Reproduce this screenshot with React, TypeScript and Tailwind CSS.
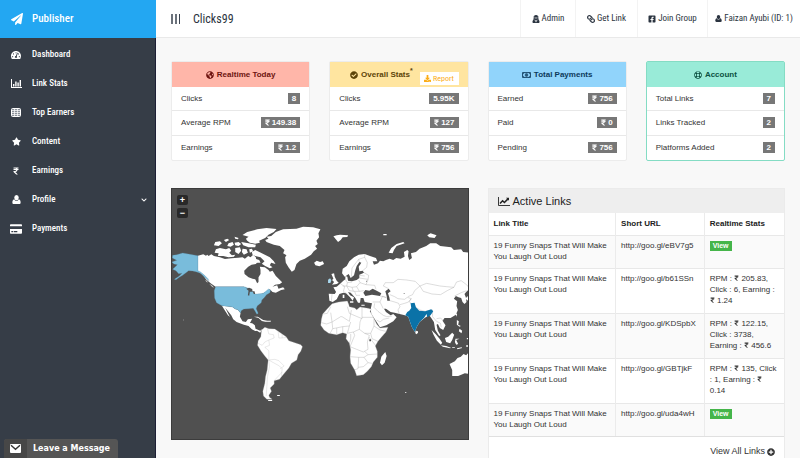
import type { ReactNode } from "react";
import {
  FaPaperPlane, FaTachometerAlt, FaStar, FaRupeeSign, FaGlobeAmericas, FaCheckCircle,
  FaDownload, FaUserSecret, FaFacebookSquare, FaRegLifeRing, FaPlusCircle, FaChevronDown, FaLink, FaCreditCard,
} from "react-icons/fa";

const narrow = "font-['Roboto_Condensed','Liberation_Sans_Narrow','Arial_Narrow',sans-serif]";

function BarsIcon() {
  return (
    <svg viewBox="0 0 11 9" className="h-[9px] w-[11px]" fill="currentColor">
      <path d="M0 0h1v8h10v1H0zM2 5h1.4v2.5H2zM4.200 2.500h1.400v5H4.200zM6.400 3.500h1.400v4H6.400zM8.600 1h1.400v6.500H8.600z" />
    </svg>
  );
}

function TableIcon() {
  return (
    <svg viewBox="0 0 10 9" className="h-[9px] w-[10px]">
      <rect x="0.500" y="0.500" width="9" height="8" rx="1" fill="#8d939b" stroke="#fff" />
      <path d="M1 2.500h8M1 4.500h8M1 6.500h8M3.500 1v7.500M6.500 1v7.500" stroke="#fff" strokeWidth="0.700" />
    </svg>
  );
}

function UserIcon({ className }: { className: string }) {
  return (
    <svg viewBox="0 0 10 10" className={className} fill="currentColor">
      <ellipse cx="5" cy="3" rx="2.500" ry="2.900" />
      <path d="M2.500 4.600C.8 4.900.4 6.800.4 8.300.4 9.400 1 10 2 10h6c1 0 1.600-.6 1.600-1.700 0-1.500-.4-3.400-2.100-3.700C6.900 5.700 6.100 6.400 5 6.400S3.100 5.700 2.500 4.600z" />
    </svg>
  );
}

function MoneyIcon() {
  return (
    <svg viewBox="0 0 18 12" className="h-[6px] w-[9px]" fill="none" stroke="currentColor" strokeWidth="1.600">
      <path d="M1 1h16v10H1z" />
      <ellipse cx="9" cy="6" rx="2.500" ry="3.200" />
      <path d="M9 4v4M1 4q3 0 3-3M17 4q-3 0-3-3M1 8q3 0 3 3M17 8q-3 0-3 3" />
    </svg>
  );
}

function TrendIcon() {
  return (
    <svg viewBox="0 0 12 9" className="h-[9px] w-[12px]" fill="none" stroke="currentColor">
      <path d="M.5 0v8.500H12" strokeWidth="0.900" />
      <path d="M2 6.500l2.600-2.700 1.800 1.700 3.600-3.600" strokeWidth="1.500" />
      <path d="M8 .7h3v3z" fill="currentColor" stroke="none" />
    </svg>
  );
}

const menu: { label: string; icon: ReactNode; more?: boolean }[] = [
  { label: "Dashboard", icon: <FaTachometerAlt size={10} /> },
  { label: "Link Stats", icon: <BarsIcon /> },
  { label: "Top Earners", icon: <TableIcon /> },
  { label: "Content", icon: <FaStar size={9} /> },
  { label: "Earnings", icon: <FaRupeeSign size={8} /> },
  { label: "Profile", icon: <UserIcon className="h-[9px] w-[9px]" />, more: true },
  { label: "Payments", icon: <FaCreditCard size={12} /> },
];

function Sidebar() {
  return (
    <aside className={`w-[156px] shrink-0 border-r border-[#1d1f35] bg-[#363d47] text-white ${narrow}`}>
      <a href="#" className="-mr-px flex h-[38px] items-center bg-[#23a7f2] pl-[11px] text-[11px] font-medium">
        <FaPaperPlane size={12} />
        <span className="ml-[9px]">Publisher</span>
      </a>
      <nav className="pt-[2px]">
        {menu.map((m) => (
          <a key={m.label} href="#" className="flex h-[29px] items-center pr-2 pl-[10px] text-[9px] font-medium">
            <span className="flex w-[12px] justify-center">{m.icon}</span>
            <span className="ml-[10px] flex-1">{m.label}</span>
            {m.more && <FaChevronDown size={6} />}
          </a>
        ))}
      </nav>
    </aside>
  );
}

function TopBar() {
  const links = [
    { label: "Admin", icon: <FaUserSecret size={8} />, w: "w-[55px]" },
    { label: "Get Link", icon: <FaLink size={8} className="-scale-x-100" />, w: "w-[62px]" },
    { label: "Join Group", icon: <FaFacebookSquare size={8} />, w: "w-[70px]" },
    { label: "Faizan Ayubi (ID: 1)", icon: <UserIcon className="h-[7px] w-[7px]" />, w: "w-[93px]" },
  ];
  return (
    <header className={`flex h-[38px] items-stretch border-b border-[#e9e9e9] bg-white text-[#2b3440] ${narrow}`}>
      <button type="button" aria-label="Toggle menu" className="ml-[15px] flex items-center gap-[2px]">
        <i className="h-[10px] w-[2px] bg-[#6b727b]" />
        <i className="h-[10px] w-[2px] bg-[#6b727b]" />
        <i className="h-[10px] w-px bg-[#3d4652]" />
      </button>
      <h1 className="ml-[13px] flex-1 self-center text-[12px]">Clicks99</h1>
      <nav className="flex text-[9px]">
        {links.map((l) => (
          <a key={l.label} href="#" className={`flex items-center justify-center gap-[2px] border-l border-[#f3f3f3] whitespace-nowrap ${l.w}`}>
            {l.icon}
            {l.label}
          </a>
        ))}
      </nav>
    </header>
  );
}

type Stat = {
  title: string;
  icon: ReactNode;
  head: string;
  border: string;
  rows: [string, string, boolean][];
  report?: boolean;
};

const stats: Stat[] = [
  {
    title: "Realtime Today", icon: <FaGlobeAmericas size={8} />, head: "bg-[#ffb6a9] text-[#6e1410]", border: "border-[#ececec]",
    rows: [["Clicks", "8", false], ["Average RPM", "149.38", true], ["Earnings", "1.2", true]],
  },
  {
    title: "Overall Stats", icon: <FaCheckCircle size={8} />, head: "bg-[#ffe5a0] text-[#5d4408]", border: "border-[#ececec]", report: true,
    rows: [["Clicks", "5.95K", false], ["Average RPM", "127", true], ["Earnings", "756", true]],
  },
  {
    title: "Total Payments", icon: <MoneyIcon />, head: "bg-[#91d4fb] text-[#0d3a5c]", border: "border-[#ececec]",
    rows: [["Earned", "756", true], ["Paid", "0", true], ["Pending", "756", true]],
  },
  {
    title: "Account", icon: <FaRegLifeRing size={8} />, head: "bg-[#99ebd8] text-[#0c5142]", border: "border-[#84dcc4]",
    rows: [["Total Links", "7", false], ["Links Tracked", "2", false], ["Platforms Added", "2", false]],
  },
];

function StatCard({ s }: { s: Stat }) {
  return (
    <section className={`rounded-[2px] border bg-white ${s.border}`}>
      <div className={`relative flex h-[25px] items-center justify-center gap-[3px] ${s.head}`}>
        {s.icon}
        <h2 className="text-[8px] leading-[12px] font-bold">
          {s.title}
          {s.report && <sup className="text-[7px] leading-none">*</sup>}
        </h2>
        {s.report ? (
          <>
            <span className="w-[32px]" />
            <button type="button" className={`absolute right-[9px] bottom-[2px] flex h-[13px] w-[39px] items-center justify-center gap-[2px] bg-white text-[8px] text-[#fbad18] ${narrow}`}>
              <FaDownload size={7} />
              Report
            </button>
          </>
        ) : null}
      </div>
      <dl className="grid h-[73px] grid-rows-3 divide-y divide-[#e8e8e8]">
        {s.rows.map(([k, v, money]) => (
          <div key={k} className="flex items-center justify-between px-[9px]">
            <dt className="text-[8px] text-[#333]">{k}</dt>
            <dd className="flex h-[11px] items-center gap-[2px] bg-[#777] px-[4px] text-[8px] font-bold text-white">
              {money && <FaRupeeSign className="h-[7px] w-[5px]" />}
              {v}
            </dd>
          </div>
        ))}
      </dl>
    </section>
  );
}

function WorldMap() {
  return (
    <div className="relative h-[252px] overflow-hidden border border-[#3c3c3c] bg-[#505050]">
      <svg viewBox="172 189 296 250" preserveAspectRatio="none" className="h-full w-full" role="img" aria-label="Clicks by country">
        <g transform="translate(170 220) scale(.33333)" fill="#fff" strokeLinejoin="round">
          {/* Canada and its islands */}
          <path d="M84 107L100 103 108 107 112 104 116 108 124 103 132 108 150 112 165 117 185 115 205 113 218 112 225 116 235 108 242 112 250 104 258 112 260 122 265 124 258 132 245 134 235 140 223 152 224 162 236 172 248 176 256 178 262 190 266 186 266 172 272 162 272 150 270 140 285 142 296 150 300 155 308 152 312 158 318 168 328 178 337 187 330 192 316 194 308 200 322 196 326 206 340 202 345 208 334 210 318 218 308 216 300 208 288 216 280 220 265 226 252 220 240 208 222 200 137 200 122 190 108 178 100 166 84 154Z" />
          <path d="M246 96L256 90 270 97 285 104 300 112 312 124 317 132 304 128 300 136 308 142 300 145 286 138 276 131 284 124 272 112 256 108 248 104Z" />
          <path d="M138 88L150 84 168 88 178 84 184 92 178 98 186 106 196 104 192 110 176 112 160 108 144 108 146 100 134 98ZM132 76L136 66 150 64 156 70 146 78ZM162 60L172 56 178 60 168 66ZM176 70L188 66 192 74 182 80 172 78ZM194 50L206 54 204 58 196 56ZM194 68L206 66 214 72 206 78 196 76ZM196 84L210 82 214 92 206 102 196 96ZM214 66L236 70 258 74 256 82 236 82 220 76ZM218 86L230 88 234 98 222 104 216 96ZM256 116L268 120 272 128 260 128ZM238 88L246 86 250 94 240 98Z" />
          <path d="M218 45L232 36 262 28 290 24 320 27 312 36 296 44 286 54 268 62 270 68 256 71 240 68 232 62 228 56 236 50Z" />
          <path d="M290 66L286 60 296 56 290 50 304 48 318 36 340 28 380 26 400 20 430 22 452 28 446 40 448 52 440 62 444 72 436 78 442 86 432 94 424 104 405 116 390 122 380 132 374 150 366 155 356 142 348 128 346 112 350 106 340 100 344 90 330 78 312 74Z" />
          <path d="M105 179l6 3 3 6-5-3zM118 191l7 4 8 8-6-2z" stroke="#505050" strokeWidth="1" />
          {/* Mexico and the Caribbean */}
          <path d="M156 257L172 259 188 261 196 267 204 269 212 279 210 290 218 304 228 306 234 298 247 296 242 306 238 312 250 314 252 326 264 332 256 333 246 328 236 318 222 314 200 306 190 298 184 286 166 263 180 291 174 286 164 270Z" />
          <path d="M252 290L264 290 280 300 292 302 304 302 302 305 286 305 276 303 266 294ZM40 299h2v2h-2z" />
          <g fill="#79bcdb" stroke="#5b8ea6" strokeWidth="0.800">
            <path d="M8 106L20 104 38 99 60 103 84 107 84 152 92 156 104 166 114 176 117 182 104 172 92 160 78 155 68 153 56 152 46 160 38 166 28 172 18 179 13 178 28 168 36 160 26 161 18 152 8 148 16 140 22 134 12 132 5 126 20 121 7 114Z" />
            <path d="M137 200L222 200 240 206 248 214 254 222 262 222 280 220 288 214 296 207 302 211 300 218 290 224 284 232 276 240 274 248 262 258 259 266 265 280 261 283 255 272 250 265 236 266 222 267 214 272 212 279 204 269 196 267 188 261 172 259 156 257 140 248 134 234 133 212Z" />
          </g>
          <path d="M229 206l9-3 9 4 1 8-8 0-2 12-4-1 2-14zM248 214l6 0 2 8-4 0z" fill="#505050" />
        </g>

        <g transform="translate(165 310) scale(.33333)" fill="#fff" stroke="#aaa" strokeWidth="0.800" strokeLinejoin="round">
          <path stroke="none" d="M236 36L250 38 262 40 270 46 272 56 286 62 292 58 286 68 276 62 264 56 256 46 242 42Z" />
          <path d="M290 60L300 52 312 56 330 57 340 64 352 72 364 80 372 92 390 98 408 104 413 110 408 124 400 134 396 150 380 160 372 174 360 188 350 200 344 208 328 212 328 222 316 234 320 244 312 256 314 262 322 268 306 268 296 258 294 244 300 220 302 200 307 180 310 150 300 138 288 122 278 106 280 92 288 80Z" />
          <path fill="none" d="M308 56L312 72 326 74 328 84 312 90 314 106 300 112 312 122 312 150 322 156 344 168 352 176 350 198M312 150L330 148 342 152 358 168 346 176M280 100L292 106 300 96 312 90M340 64L342 84 352 84 366 82M352 72L352 84M312 150L314 170 308 200 306 230 304 258M328 212L352 186" />
          <path stroke="none" d="M337 255h8v3h-8zM722 246h3v3h-3zM310 270h12v3h-12z" />
        </g>

        <g transform="translate(315 250) scale(.33333)" strokeLinejoin="round">
          {/* Europe and Asia */}
          <path
            fill="#fff"
            d="M42 131L60 132 64 126 56 112 66 110 78 100 86 92 92 88 92 78 98 80 100 92 112 94 126 90 134 84 134 74 148 68 144 62 134 64 132 50 140 38 134 36 126 48 122 60 118 76 108 84 102 72 90 80 82 70 84 56 96 48 104 34 118 22 132 14 150 12 166 18 184 24 188 34 174 34 178 44 190 40 196 32 206 34 214 30 225 26 236 30 245 24 258 26 270 20 268 6 278 0 282 4 280 18 284 30 292 24 289 10 304 6 315 -4 335 -12 347 -20 365 -20 377 -12 410 -8 418 0 440 -2 446 6 463 8 463 118 455 126 450 132 454 142 456 156 450 162 444 156 440 144 432 142 424 138 418 146 428 154 426 168 430 180 424 194 408 204 390 204 384 212 393 226 386 240 376 234 370 222 366 224 370 242 378 256 374 258 362 240 358 216 350 204 344 196 331 203 315 216 306 232 301 246 292 232 285 212 281 200 271 196 255 192 240 188 228 186 214 176 208 176 214 186 228 196 236 192 246 202 236 214 215 226 196 232 186 216 170 192 168 178 172 160 150 156 146 144 138 144 136 158 130 158 122 144 108 128 100 126 106 136 118 142 114 152 106 142 94 130 86 128 74 132 66 148 54 156 44 152Z"
          />
          {/* Islands of the north and west */}
          <path fill="#fff" d="M-2 38L6 32 16 36 24 34 28 42 14 49 2 46ZM50 72L58 70 60 80 66 92 72 98 66 102 52 104 58 96 52 90 56 86ZM56 -41L66 -44 76 -46 100 -44 98 -39 84 -38 78 -30 70 -24 62 -34ZM222 8L230 -6 246 -18 266 -24 270 -20 246 -12 238 0 234 10ZM338 -44L348 -50 366 -44 360 -36 344 -38ZM206 -48h10v4h-10z" />
          <path fill="#a9d8ee" d="M40 89L46 85 50 91 47 99 40 99Z" />
          {/* Africa */}
          <path
            fill="#fff"
            stroke="#aaa"
            strokeWidth="0.800"
            d="M52 161L72 156 98 153 102 163 104 170 120 174 126 179 136 171 160 175 170 178 166 184 176 202 186 222 196 234 220 232 214 246 200 262 190 274 182 288 188 304 188 322 176 336 170 350 158 364 146 374 126 377 120 360 108 340 106 320 108 300 104 280 94 266 96 252 84 248 66 254 42 250 28 240 18 226 20 208 24 192 38 176Z"
          />
          <path fill="#fff" d="M212 306L216 318 210 338 202 346 196 338 200 320ZM84 134h5v10h-5zM106 154h10v4h-10zM140 164h10v3h-10zM303 242l6 4-2 7-5-3z" />
          {/* Inland seas */}
          <path fill="#505050" d="M146 128L152 120 164 122 174 116 186 122 200 130 196 138 172 134 152 138ZM212 124L222 116 228 124 220 130 224 142 226 152 218 152 216 138ZM164 268h5v6h-5zM154 94l4-3-2 5zM268 128l3 4-4-1z" />
          <path
            fill="none"
            stroke="#999"
            strokeWidth="1"
            d="M48 170L38 190 26 192M48 188L52 216 78 200 82 200 104 214 110 180M98 170L104 190 142 206 142 172M142 202L176 202M52 216L36 222 20 218M52 216L54 236 84 230 104 228 108 216M84 230L84 248M66 234V252M54 236L46 250M104 228L98 250 116 246 134 238 136 216 140 206M134 238L150 250 168 250 178 228 178 206M178 228L196 240 214 244M168 250L172 266 190 274M108 252L108 268 104 280M116 246L120 256 106 290 126 298 146 306 160 298 158 276 164 256 150 250M164 262L184 288M106 320L132 322 148 322 160 314 188 312M132 322L130 356 118 360M148 322L160 338 146 350 130 352M160 314L150 304M160 338L172 340M76 100L90 110 86 124 94 130M92 88L98 98 96 108 112 112 126 110 136 98 132 90M98 98L112 96M136 98L154 104 180 106 184 118M96 108L104 122 120 124 124 136 136 136M126 110L134 124 148 122M120 124L134 124M112 112L116 124M84 108L96 108M52 132L50 152M110 80L112 54 132 28 150 22 150 12M134 36L132 28M150 22L158 38 156 52 144 62M148 68L162 76 160 90 154 104M134 84L160 88M134 76L150 78M174 156L196 156 206 176M196 156L204 138 216 144M196 138L214 142M180 160L178 172 190 184 206 196 216 200 232 198M206 208L196 216 186 210M206 208L224 204M226 152L240 156 252 160 256 170 250 180 254 192M226 134L240 140 250 146 270 148 278 142 290 146 282 156 270 160 256 164M222 116L206 108 212 98 236 98 250 88 276 90 302 94 316 108 300 122 294 134 280 140M316 108L336 100 356 104 376 108 396 110 418 112 426 96 440 92 456 104 463 112M316 108L326 124 352 132 378 134 398 122 418 112M290 146L284 154 290 162 300 170 316 180 332 184 354 180M354 180L354 200 366 214M366 206L378 204 388 214M366 214L378 220 380 232M420 138L440 128 456 122"
          />
          <path fill="#0b72a7" d="M288 160L300 158 304 172 314 182 332 184 350 178 356 184 348 196 338 202 336 192 328 204 315 216 306 232 301 246 292 232 285 212 281 200 272 196 278 186 284 182 290 174Z" />
        </g>

        <g transform="translate(390 230) scale(.33333)" fill="#fff">
          {/* Southeast Asia and Australia */}
          <path d="M126 300L138 312 150 326 158 338 154 344 142 332 132 314ZM154 346L170 348 184 353 182 355 160 350ZM166 324L176 320 188 308 194 314 188 330 182 340 170 336ZM198 326L210 326 200 330 206 342 200 344 196 336ZM202 270L208 274 206 284 214 288 210 290 202 284ZM210 296L218 302 216 310 208 304ZM198 250L203 252 200 260ZM188 352h8v2h-8zM202 355l14-3 2 2-14 4zM232 324h8v4h-8zM230 346h8v4h-8zM234 198L228 206 240 216ZM80 302l5 2 0 6-5-1z" />
          <path d="M180 402L196 394 204 384 214 380 222 372 230 376 242 362 242 432 226 430 206 438 188 438 188 420Z" />
        </g>
      </svg>
      <div className="absolute top-[6px] left-[5px] flex flex-col gap-[3px] text-[9px] leading-none font-bold text-white">
        <button type="button" aria-label="Zoom in" className="flex h-[10px] w-[11px] items-center justify-center rounded-[2px] bg-[#292929]">+</button>
        <button type="button" aria-label="Zoom out" className="flex h-[10px] w-[11px] items-center justify-center rounded-[2px] bg-[#292929]">−</button>
      </div>
    </div>
  );
}

const rupee = <FaRupeeSign className="inline h-[6px] w-[5px] align-baseline" />;

const links: { url: string; stats?: ReactNode[] }[] = [
  { url: "http://goo.gl/eBV7g5" },
  { url: "http://goo.gl/b61SSn", stats: [<>RPM : {rupee} 205.83,</>, "Click : 6, Earning :", <>{rupee} 1.24</>] },
  { url: "http://goo.gl/KDSpbX", stats: [<>RPM : {rupee} 122.15,</>, "Click : 3738,", <>Earning : {rupee} 456.6</>] },
  { url: "http://goo.gl/GBTjkF", stats: [<>RPM : {rupee} 135, Click</>, <>: 1, Earning : {rupee}</>, "0.14"] },
  { url: "http://goo.gl/uda4wH" },
];

function ActiveLinks() {
  return (
    <section className="border border-[#ebebeb] bg-white">
      <h2 className="flex h-[24px] items-center gap-[3px] bg-[#eeeeee] pl-[9px] text-[11px] text-[#222]">
        <TrendIcon />
        Active Links
      </h2>
      <table className="w-full table-fixed border-collapse text-left text-[8px] leading-[11px] text-[#333]">
        <colgroup>
          <col className="w-[43%]" />
          <col className="w-[30%]" />
          <col className="w-[27%]" />
        </colgroup>
        <thead>
          <tr className="h-[22px] text-[#222]">
            <th className="border-r border-[#ebebeb] pl-[5px]">Link Title</th>
            <th className="border-r border-[#ebebeb] pl-[5px]">Short URL</th>
            <th className="pl-[5px]">Realtime Stats</th>
          </tr>
        </thead>
        <tbody>
          {links.map((l) => (
            <tr key={l.url} className={`border-t border-[#e8e8e8] align-top odd:bg-[#fafafa] ${l.stats ? "h-[45px]" : "h-[33px]"}`}>
              <td className="border-r border-[#ebebeb] pt-[4px] pl-[5px]">19 Funny Snaps That Will Make You Laugh Out Loud</td>
              <td className="border-r border-[#ebebeb] pt-[4px] pl-[5px]">{l.url}</td>
              <td className="pt-[4px] pl-[5px]">
                {l.stats ? (
                  l.stats.map((line, i) => <span key={i} className="block whitespace-nowrap">{line}</span>)
                ) : (
                  <a href="#" className="inline-block h-[10px] bg-[#45b54a] px-[3px] text-[7px] leading-[10px] font-bold text-white">View</a>
                )}
              </td>
            </tr>
          ))}
        </tbody>
      </table>
      <div className="flex h-[30px] items-center justify-end border-t border-[#e0e0e0] pr-[9px] text-[9px] text-[#333]">
        <a href="#" className="flex items-center gap-[2px]">
          View All Links <FaPlusCircle size={8} />
        </a>
      </div>
    </section>
  );
}

export default function App() {
  return (
    <div className="flex h-screen overflow-hidden bg-[#f8f8f8] font-['Liberation_Sans',Arial,sans-serif]">
      <Sidebar />
      <div className="min-w-0 flex-1">
        <TopBar />
        <main className="pt-[23px] pr-[15px] pl-[15px]">
          <div className="grid grid-cols-4 gap-[19px]">
            {stats.map((s) => (
              <StatCard key={s.title} s={s} />
            ))}
          </div>
          <div className="mt-[27px] grid grid-cols-2 items-start gap-[19px]">
            <WorldMap />
            <ActiveLinks />
          </div>
        </main>
      </div>
      <button type="button" className="fixed bottom-0 left-[4px] flex h-[19px] w-[114px] items-stretch overflow-hidden rounded-t-[3px] bg-[#555] font-['DejaVu_Sans',sans-serif] text-[8px] font-bold text-white">
        <span className="flex w-[23px] items-center justify-center bg-[#474747]">
          <svg viewBox="0 0 11 9" className="h-[9px] w-[11px]">
            <rect width="11" height="9" rx="1" fill="#fff" />
            <path d="M1 1.200l4.500 4 4.500-4" fill="none" stroke="#333" strokeWidth="1.400" />
          </svg>
        </span>
        <span className="self-center pl-[6px]">Leave a Message</span>
      </button>
    </div>
  );
}
